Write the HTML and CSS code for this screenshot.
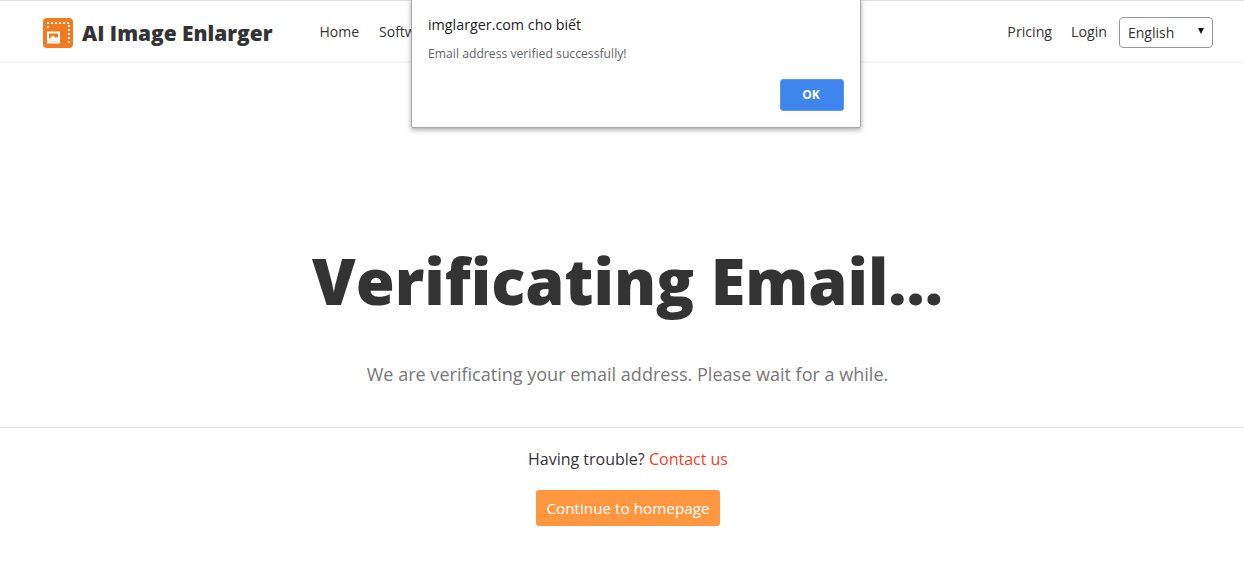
FILE: index.html
```html
<!DOCTYPE html>
<html lang="en">
<head>
<meta charset="utf-8">
<title>AI Image Enlarger</title>
<link rel="stylesheet" href="styles.css">
</head>
<body>
<header class="nav">
  <a class="brand" href="#">
    <svg class="logo" width="30" height="30" viewBox="0 0 30 30" aria-hidden="true">
      <rect width="30" height="30" rx="4" fill="#f47a20"/>
      <path d="M4 5H26V26" fill="none" stroke="#fff" stroke-width="2" stroke-dasharray="2 2"/>
      <path d="M5 8V12" fill="none" stroke="#fff" stroke-width="2" stroke-dasharray="2 2"/>
      <rect x="5" y="14.500" width="11" height="10" fill="none" stroke="#fff" stroke-width="2"/>
      <path d="M6 23.500v-2.500l4-3.500 3 2.500 1-1 1 1v3.500z" fill="#fff"/>
    </svg>
    <span class="brand-name">AI Image Enlarger</span>
  </a>
  <nav class="links">
    <a href="#">Home</a>
    <a href="#">Software</a>
  </nav>
  <div class="right">
    <a href="#">Pricing</a>
    <a href="#">Login</a>
    <div class="lang"><span>English</span><span class="caret"></span></div>
  </div>
</header>
<main>
  <section class="hero">
    <h1>Verificating Email...</h1>
    <p>We are verificating your email address. Please wait for a while.</p>
  </section>
  <section class="help">
    <p>Having trouble? <a href="#">Contact us</a></p>
    <a class="cta" href="#">Continue to homepage</a>
  </section>
</main>
<div class="dialog" role="alertdialog">
  <div class="dialog-title">imglarger.com cho biết</div>
  <div class="dialog-msg">Email address verified successfully!</div>
  <div class="dialog-actions"><button class="ok">OK</button></div>
</div>
</body>
</html>
```
FILE: styles.css
```css
* { box-sizing: border-box; }
html, body { margin: 0; height: 100%; overflow: hidden; }
body { font-family: "Open Sans", sans-serif; color: #333; background: #fff; }
a { color: inherit; text-decoration: none; }

.nav {
  height: 63px;
  border-top: 1px solid #dfdfe3;
  border-bottom: 2px solid #f5f5f5;
  display: flex;
  align-items: center;
  padding: 2px 31px 0 43px;
  font-size: 14px;
}
.brand { display: flex; align-items: center; gap: 9px; margin-top: 2px; }
.logo { display: block; }
.brand-name { font-size: 20.900px; font-weight: 800; color: #333; line-height: 30px; }
.links { display: flex; gap: 20px; margin-left: 47px; margin-top: -2px; }
.right { display: flex; align-items: center; gap: 19px; margin-left: auto; }
.right > a { margin-top: -2px; font-size: 14.200px; }
.lang {
  width: 94px;
  height: 31px;
  margin-left: -7px;
  margin-top: 1px;
  border: 1px solid #999;
  border-radius: 4px;
  display: flex;
  align-items: center;
  justify-content: space-between;
  padding: 0 8px;
}
.caret {
  width: 0;
  height: 0;
  border-left: 3px solid transparent;
  border-right: 3px solid transparent;
  border-top: 6px solid #111;
  margin-top: -3px;
}

main { padding-left: 11px; text-align: center; }
.hero { height: 364px; padding-top: 178px; }
h1 { margin: 0; font-size: 63px; line-height: 80px; font-weight: 800; color: #333; }
.hero p { margin: 40px 0 0; font-size: 18.050px; line-height: 26px; color: #777; }
.help { margin-left: -11px; padding: 19px 0 0 12px; border-top: 1px solid #e8e8e8; font-size: 16px; }
.help p { margin: 0; line-height: 24px; }
.help p a { color: #f73c2a; }
.cta {
  display: inline-block;
  margin-top: 19px;
  height: 36px;
  padding: 0 10.500px;
  line-height: 37px;
  border-radius: 3px;
  background: #ff9640;
  color: #fff;
  font-size: 15.250px;
}

.dialog {
  position: absolute;
  left: 411px;
  top: -1px;
  width: 450px;
  height: 129px;
  padding: 15px 16px 0 16px;
  background: #fff;
  border: 1px solid #a8a8a8;
  border-radius: 0 0 2px 2px;
  box-shadow: 0 2px 5px rgba(0, 0, 0, .35);
}
.dialog-title { font-size: 14.300px; line-height: 20px; color: #222; }
.dialog-msg { margin-top: 10px; font-size: 12.200px; line-height: 18px; color: #5f6368; }
.dialog-actions { display: flex; justify-content: flex-end; margin-top: 16px; }
.ok {
  width: 64px;
  height: 32px;
  padding: 0 2px 1px 0;
  border: 1px solid #5a9bf3;
  border-radius: 3px;
  background: #3f85ee;
  color: #fff;
  font: 700 12px "Open Sans", sans-serif;
}
```
